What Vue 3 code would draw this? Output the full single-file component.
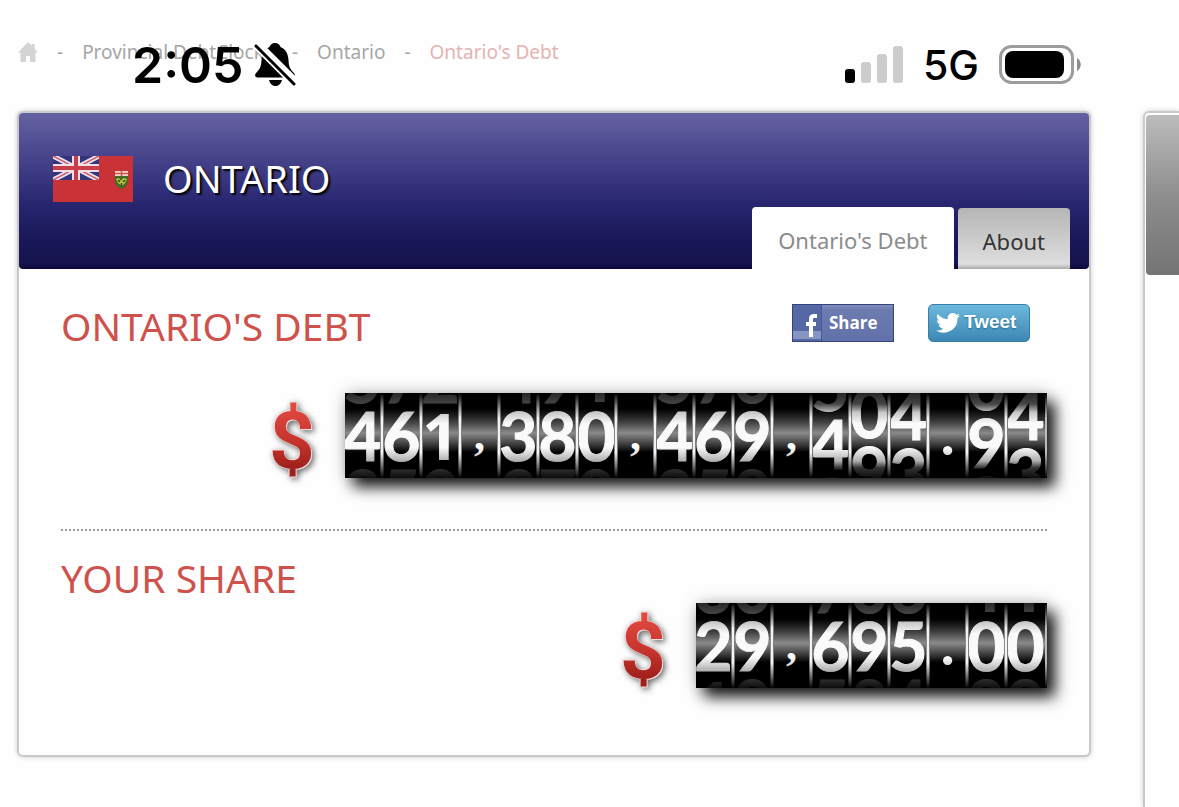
<script setup>
function makeReels(value, shifts = {}) {
  return value.split('').map((char, index) => {
    if (!/\d/.test(char)) return { char, mark: true }
    const digit = Number(char)
    return {
      char,
      mark: false,
      shift: shifts[index] || 0,
      strip: [(digit + 1) % 10, digit, (digit + 9) % 10]
    }
  })
}

const counters = [
  {
    id: 'debt',
    title: "ONTARIO'S DEBT",
    social: true,
    reels: makeReels('461,380,469,404.94', { 12: 8, 13: -23, 14: -21, 16: 7, 17: -21 })
  },
  { id: 'share', title: 'YOUR SHARE', social: false, reels: makeReels('29,695.00') }
]
</script>

<template>
  <div class="page">
    <div class="status">
      <div class="status-left">
        <span class="clock">2:05</span>
        <svg class="bell" viewBox="0 0 42 46" aria-hidden="true">
          <path d="M21 1c-3 0-5 2-5.500 4C10 7 8 12 7.500 18c-.4 7-1.500 9-5 12.500C0 33 1 35.500 4 35.500h34c3 0 4-2.500 1.500-5C36 27 34.900 25 34.500 18 34 12 32 7 26.500 5 26 3 24 1 21 1z" />
          <path d="M15 38h13c-1 4-3.500 6-6.500 6S16 42 15 38z" />
          <path d="M4 1l40 40" stroke="#fff" stroke-width="6" />
          <path d="M3 4l37 37" stroke="#fff" stroke-width="8" />
          <path d="M2 4l38 38" stroke="#000" stroke-width="3" stroke-linecap="round" />
        </svg>
      </div>
      <div class="status-right">
        <svg class="signal" viewBox="0 0 58 38" aria-hidden="true">
          <rect x="0" y="23" width="10" height="14" rx="3" />
          <rect x="16" y="16" width="10" height="21" rx="3" fill="#ccc" />
          <rect x="32" y="8" width="10" height="29" rx="3" fill="#ccc" />
          <rect x="48" y="0" width="10" height="37" rx="3" fill="#ccc" />
        </svg>
        <span class="network">5G</span>
        <svg class="battery" viewBox="0 0 82 40" aria-hidden="true">
          <rect x="1.500" y="1.500" width="72" height="36" rx="11" fill="none" stroke="#9c9c9c" stroke-width="3" />
          <rect x="6" y="6" width="59" height="27" rx="8" />
          <path d="M78 13c5 3 5 10 0 13z" fill="#8c8c8c" />
        </svg>
      </div>
    </div>

    <nav class="crumbs" aria-label="Breadcrumb">
      <a href="#" class="home" aria-label="Home">
        <svg viewBox="0 0 20 20" aria-hidden="true">
          <path d="M10 0l3.500 3.500V2h3v4.500L20 10.500h-2.500V20H12v-6H8v6H2.500v-9.500H0z" />
        </svg>
      </a>
      <span class="dash">-</span>
      <a href="#">Provincial DebtClocks</a>
      <span class="dash">-</span>
      <a href="#">Ontario</a>
      <span class="dash">-</span>
      <a href="#" class="current">Ontario's Debt</a>
    </nav>

    <div class="columns">
      <main class="card">
        <header class="banner">
          <svg class="flag" viewBox="0 0 80 46" aria-hidden="true">
            <rect width="80" height="46" fill="#c93236" />
            <svg width="46" height="24" viewBox="0 0 46 24">
              <rect width="46" height="24" fill="#33347c" />
              <path d="M0 0l46 24M46 0L0 24" stroke="#eee4f0" stroke-width="5" />
              <path d="M0 0l46 24M46 0L0 24" stroke="#cc5260" stroke-width="1.500" />
              <path d="M23 0v24M0 12h46" stroke="#f0dfe6" stroke-width="8" />
              <path d="M23 0v24M0 12h46" stroke="#c93c48" stroke-width="4" />
            </svg>
            <path d="M62 15h13v9c0 5-3 7-6.500 9-3.500-2-6.500-4-6.500-9z" fill="#3f6b25" />
            <path d="M62 15h13v5H62z" fill="#f3d9d4" />
            <path d="M68.500 15v5M62 17.500h13" stroke="#d65246" stroke-width="1.500" />
            <path d="M63 23l3-1 2 3 2-3 4 1-2 4-3 3-4-3z" fill="#c6c93e" />
            <path d="M65 24l2 2M72 24l-2 2M68.500 27v3" stroke="#28451c" stroke-width="1.500" />
          </svg>
          <h1>ONTARIO</h1>
          <nav class="tabs" aria-label="Sections">
            <a href="#" class="tab active">Ontario's Debt</a>
            <a href="#" class="tab">About</a>
          </nav>
        </header>

        <section v-for="item in counters" :key="item.id" class="total" :class="item.id">
          <div class="heading">
            <h2>{{ item.title }}</h2>
            <div v-if="item.social" class="social">
              <button type="button" class="facebook">
                <svg viewBox="0 0 29 36" aria-hidden="true">
                  <rect width="29" height="36" fill="#5568a5" />
                  <rect y="26" width="28" height="8" fill="#8795c3" />
                  <path d="M24 11h-3c-2 0-3 1-3 3v18M13 19h10" fill="none" stroke="#fff" stroke-width="4" />
                  <path d="M28.500 0v36" stroke="#465895" />
                </svg>
                <span>Share</span>
              </button>
              <button type="button" class="twitter">
                <svg viewBox="0 0 24 20" aria-hidden="true">
                  <path d="M24 2.400a10 10 0 0 1-2.800.8A5 5 0 0 0 23.300.500a10 10 0 0 1-3.100 1.200 4.900 4.900 0 0 0-8.400 4.500A14 14 0 0 1 1.700 1a5 5 0 0 0 1.500 6.600A5 5 0 0 1 1 7a5 5 0 0 0 3.900 4.900 5 5 0 0 1-2.200.1 5 5 0 0 0 4.600 3.400A10 10 0 0 1 0 17.500 14 14 0 0 0 21.500 5 10 10 0 0 0 24 2.400z" />
                </svg>
                <span>Tweet</span>
              </button>
            </div>
          </div>
          <div class="amount">
            <span class="dollar">$</span>
            <div class="counter">
              <div v-for="(reel, index) in item.reels" :key="index" class="cell">
                <span v-if="reel.mark" class="mark" :class="{ point: reel.char === '.' }">{{ reel.char }}</span>
                <div v-else class="strip" :style="{ transform: `translateY(${reel.shift}px)` }">
                  <span v-for="digit in reel.strip" :key="digit" class="digit" :class="{ one: digit === 1 }">{{ digit }}</span>
                </div>
              </div>
            </div>
          </div>
        </section>
      </main>

      <aside class="side"><div class="side-head"></div></aside>
    </div>
  </div>
</template>

<style>
body {
  margin: 0;
  background: #fefefe;
}
</style>

<style scoped>
* {
  box-sizing: border-box;
}
.page {
  position: relative;
  display: flex;
  flex-direction: column;
  min-height: 100vh;
  overflow: hidden;
  font-family: "Noto Sans", "Open Sans", sans-serif;
}
a {
  color: inherit;
  text-decoration: none;
}
h1,
h2 {
  margin: 0;
  font-weight: 400;
}
button {
  padding: 0;
  font: inherit;
  cursor: pointer;
}

/* Phone status bar, floating over the page */
.status {
  position: absolute;
  z-index: 2;
  top: 35px;
  left: 132px;
  right: 98px;
  display: flex;
  justify-content: space-between;
  align-items: center;
  height: 60px;
  font-family: Inter, sans-serif;
  color: #000;
}
.status-left,
.status-right {
  display: flex;
  align-items: center;
}
.status-left {
  gap: 10px;
}
.status-right {
  gap: 20px;
}
.clock {
  font-size: 50px;
  font-weight: 600;
}
.bell {
  width: 42px;
  height: 46px;
}
.signal {
  width: 58px;
  height: 38px;
}
.network {
  font-size: 41px;
  font-weight: 500;
}
.battery {
  width: 82px;
  height: 40px;
}

.crumbs {
  display: flex;
  align-items: center;
  gap: 19px;
  height: 111px;
  padding: 0 18px 8px;
  font-size: 19px;
  line-height: 24px;
  color: #a6a6a6;
}
.home svg {
  display: block;
  width: 20px;
  height: 20px;
  fill: #d4d4d4;
}
.crumbs .current {
  color: #e5b3b0;
}

.columns {
  display: flex;
  flex: 1;
  align-items: stretch;
  gap: 52px;
  padding-left: 17px;
}
.card {
  flex: 1;
  align-self: flex-start;
  min-width: 0;
  padding-bottom: 67px;
  border: 2px solid #c9c9c9;
  border-radius: 6px;
  background: #fefefe;
  box-shadow: 0 0 5px rgba(0, 0, 0, 0.2);
}
.banner {
  display: flex;
  align-items: flex-start;
  height: 156px;
  padding: 43px 19px 0 34px;
  border-radius: 4px;
  background: linear-gradient(#6561a2, #45428a 30%, #28266f 58%, #1a1859 80%, #16134f 96%, #0b0938);
}
.flag {
  width: 80px;
  height: 46px;
  flex: none;
}
h1 {
  margin-left: 30px;
  font-size: 38px;
  line-height: 44px;
  color: #fff;
  text-shadow: 2px 2px 2px #000;
}
.tabs {
  display: flex;
  align-items: flex-end;
  align-self: flex-end;
  gap: 4px;
  margin-left: auto;
}
.tab {
  height: 61px;
  padding: 0 25px;
  border-radius: 4px 4px 0 0;
  background: linear-gradient(#b5b5b5, #dedede 92%, #aaa);
  font-size: 22px;
  line-height: 66px;
  color: #333;
}
.tab.active {
  height: 62px;
  padding: 0 26px;
  background: #fefefe;
  color: #8b8b8b;
}

.total {
  margin: 0 42px;
}
.debt {
  padding: 35px 0 51px;
  border-bottom: 2px dotted #999;
}
.share {
  padding-top: 25px;
}
.heading {
  display: flex;
  align-items: flex-start;
  justify-content: space-between;
  height: 46px;
}
h2 {
  font-size: 39px;
  line-height: 44px;
  color: #ce514c;
}
.social {
  display: flex;
  gap: 34px;
  padding-right: 17px;
}
.social button {
  display: flex;
  align-items: center;
  width: 102px;
  height: 38px;
  font-size: 19px;
  font-weight: 700;
  line-height: 24px;
  color: #fff;
}
.social .facebook {
  gap: 7px;
  border: 1px solid #35437d;
  background: linear-gradient(#8290bd, #6c7bb0 12%, #6271a9);
  font-family: "Open Sans", sans-serif;
  font-size: 17px;
}
.facebook svg {
  width: 29px;
  height: 36px;
}
.social .twitter {
  gap: 4px;
  padding-left: 7px;
  border: 1px solid #397fa9;
  border-radius: 5px;
  background: linear-gradient(#6db9dc, #3c87b5);
  font-family: "Liberation Sans", sans-serif;
  text-shadow: 0 1px 2px #296b93;
}
.twitter svg {
  width: 24px;
  height: 20px;
  fill: #fff;
}
.twitter span {
  padding-bottom: 3px;
}

.amount {
  display: flex;
  align-items: center;
  justify-content: flex-end;
  gap: 28px;
}
.debt .amount {
  margin-top: 43px;
}
.share .amount {
  margin-top: 1px;
}
.dollar {
  height: 85px;
  padding: 0 2px;
  font-family: Roboto, sans-serif;
  font-size: 80px;
  font-weight: 700;
  line-height: 97px;
  color: transparent;
  background: linear-gradient(#df4a41 15%, #c8352e 55%, #9d1f1b 90%);
  background-clip: text;
  -webkit-background-clip: text;
  filter: drop-shadow(1px 1px 0 #f6dedd) drop-shadow(-1px -1px 0 #f6dedd) drop-shadow(2px 2px 3px rgba(0, 0, 0, 0.6));
}
.counter {
  display: flex;
  height: 85px;
  background: #000;
  box-shadow: 8px 9px 14px rgba(0, 0, 0, 0.9), 0 0 16px rgba(0, 0, 0, 0.2);
}
.cell {
  position: relative;
  display: flex;
  flex-direction: column;
  justify-content: center;
  width: 39px;
  height: 85px;
  padding-right: 4px;
  overflow: hidden;
  background: linear-gradient(#000 18%, #4a4a4a 36%, #8a8a8a 47%, #4a4a4a 58%, #000 70%);
}
/* Shading that rounds the drum */
.cell::before {
  content: "";
  position: absolute;
  z-index: 1;
  inset: 0;
  background: linear-gradient(rgba(0, 0, 0, 0.85), rgba(0, 0, 0, 0.72) 13%, rgba(0, 0, 0, 0.2) 23%, transparent 36%, transparent 64%, rgba(0, 0, 0, 0.3) 80%, rgba(0, 0, 0, 0.8) 88%, rgba(0, 0, 0, 0.95));
}
/* Metal rail between reels */
.cell::after {
  content: "";
  position: absolute;
  z-index: 2;
  top: 0;
  right: 0;
  bottom: 0;
  width: 4px;
  background: linear-gradient(#000, transparent 30%, transparent 70%, #000), linear-gradient(90deg, #555, #fff 40%, #fff 60%, #444);
}
.cell:last-child::after {
  width: 2px;
}
.strip {
  display: flex;
  flex-direction: column;
  align-items: center;
}
.digit {
  flex: none;
  height: 58px;
  font-family: Lato, sans-serif;
  font-size: 66px;
  font-weight: 700;
  line-height: 57px;
  color: #fafafa;
  -webkit-text-stroke: 1px #fafafa;
}
.digit.one {
  font-family: "Open Sans", sans-serif;
  font-size: 64px;
  -webkit-text-stroke: 0;
}
.mark {
  font-family: "Liberation Serif", serif;
  font-size: 44px;
  font-weight: 700;
  line-height: 60px;
  text-align: center;
  color: #fff;
}
.mark.point {
  padding-bottom: 8px;
  font-family: Lato, sans-serif;
  font-size: 60px;
}

.side {
  flex: none;
  width: 36px;
  padding: 2px 0 0 1px;
  border: 2px solid #c9c9c9;
  border-width: 2px 0 0 2px;
  border-radius: 6px 0 0 0;
  box-shadow: 0 0 5px rgba(0, 0, 0, 0.2);
}
.side-head {
  height: 160px;
  border-radius: 4px 0 0 4px;
  background: linear-gradient(#bcbcbc, #8e8e8e 50%, #747474);
}
</style>
